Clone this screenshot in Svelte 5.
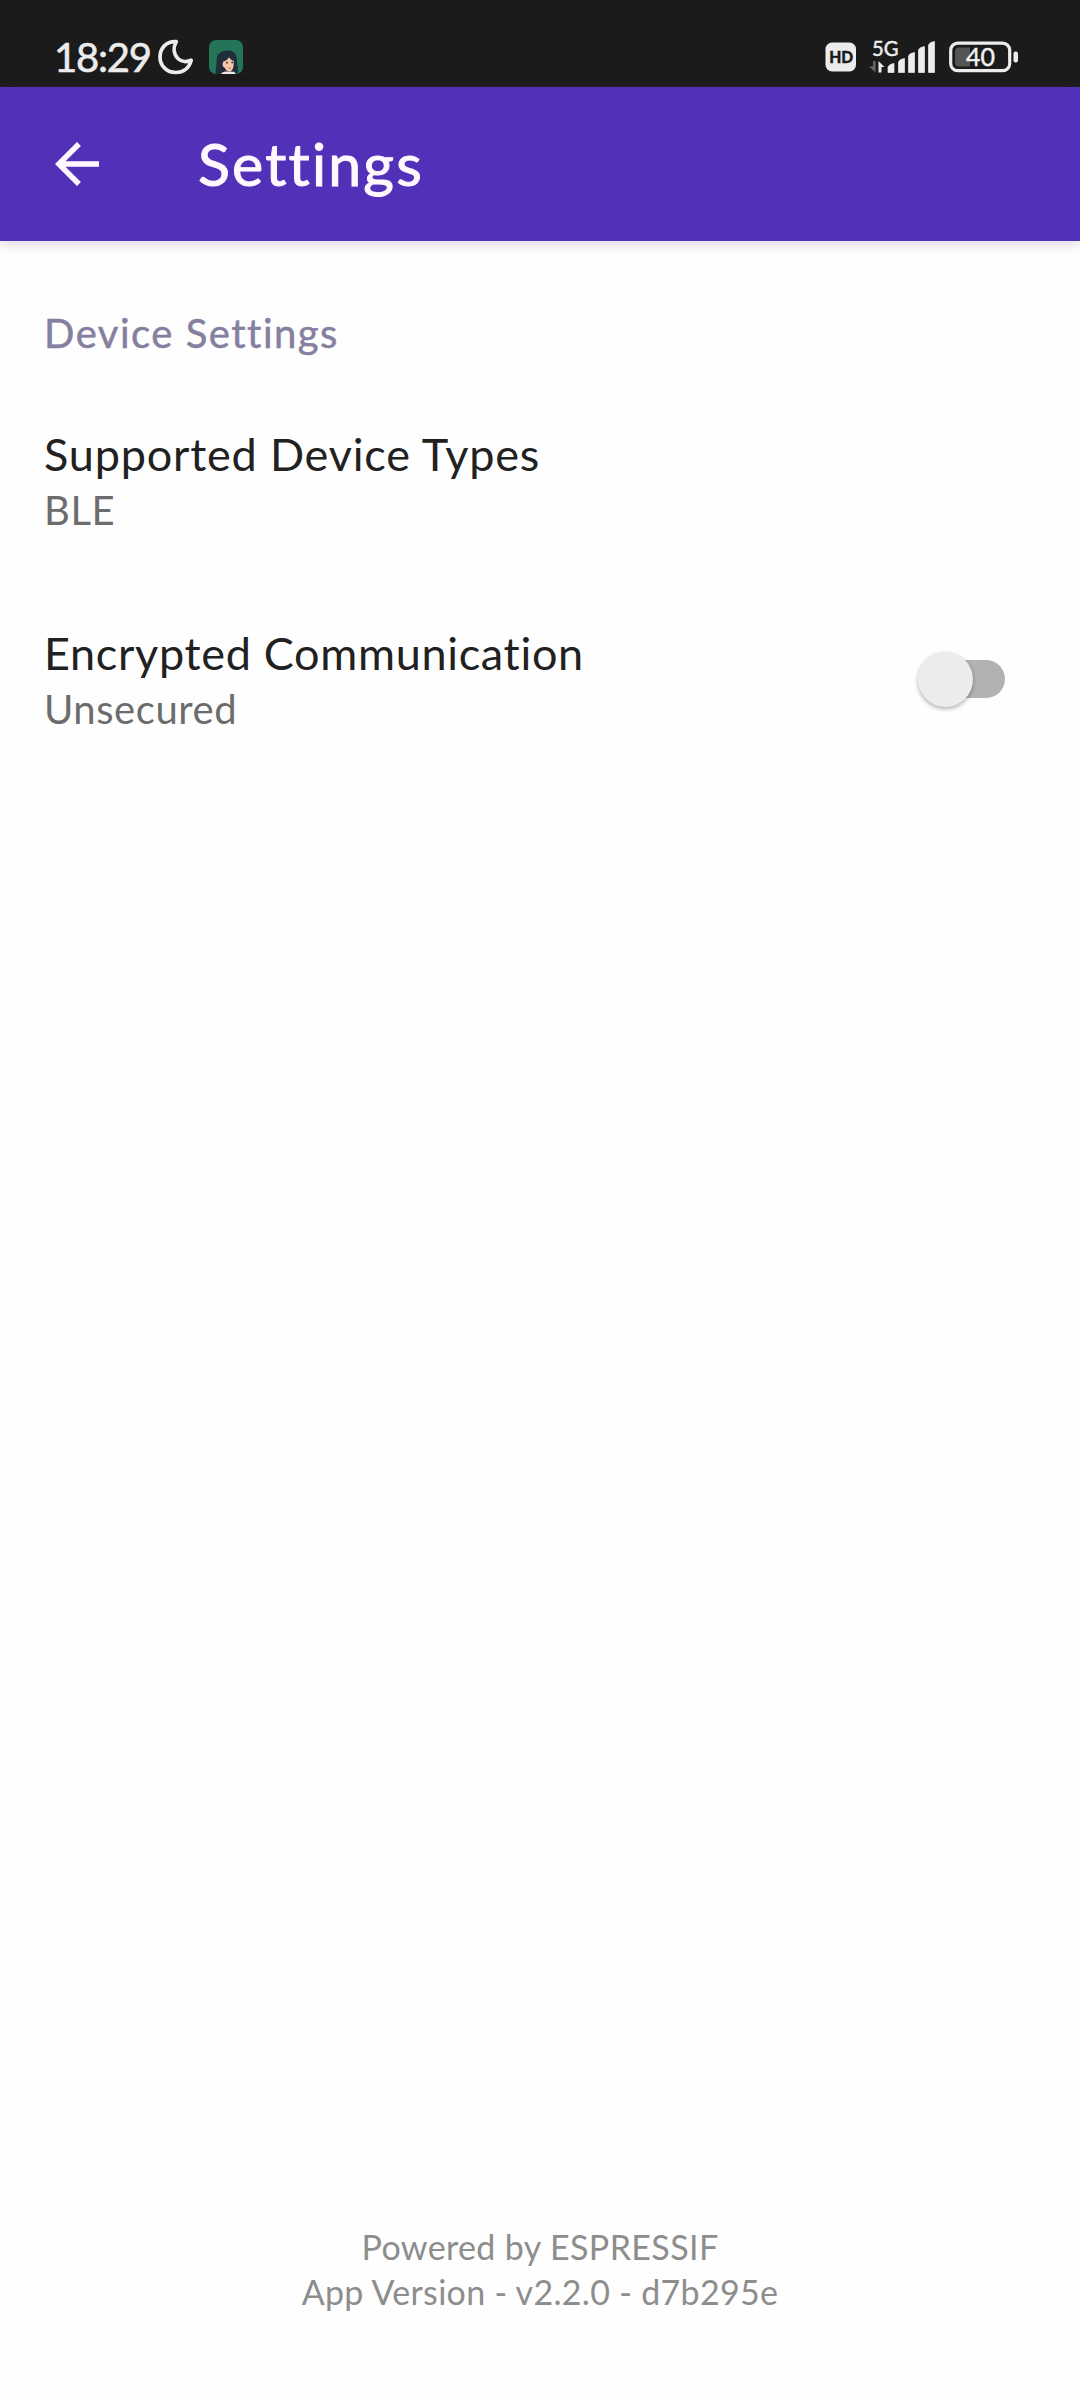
<script>
  const settings = [
    { id: 'types', title: 'Supported Device Types', value: 'BLE', toggle: false },
    { id: 'encrypted', title: 'Encrypted Communication', value: 'Unsecured', toggle: true }
  ];
  const bars = [
    { x: 19, top: 24 },
    { x: 29.5, top: 19 },
    { x: 39.5, top: 13 },
    { x: 49.5, top: 7 },
    { x: 59.5, top: 2 }
  ];
</script>

<div class="screen">
  <div class="status">
    <div class="left">
      <span class="clock">18:29</span>
      <svg class="moon" width="36" height="36" viewBox="0 0 36 36">
        <path d="M18.300 2.700C8 2 2 9.500 2 18c0 9 7 15.500 15.800 15.500 8 0 13.500-5 15.400-12.300-4 2.100-9.700 1.900-13.300-1.700C15.500 15 15 8.500 18.300 2.700Z" fill="none" stroke="#ececec" stroke-width="3.700" stroke-linejoin="round" />
      </svg>
      <svg class="avatar" width="34" height="34" viewBox="0 0 34 34">
        <defs><clipPath id="tile"><rect width="34" height="34" rx="7" /></clipPath></defs>
        <g clip-path="url(#tile)">
          <rect width="34" height="34" fill="#247558" />
          <path d="M7 34C6 30 8 26 7.500 20c0-6 5-10 11-9.500 6-.5 10 4 9.500 11 0 5 2.500 8 0 12.500Z" fill="#202d3b" />
          <path d="M12 34c.5-2 3-2.300 5-2.600l8 .3 2 2.300Z" fill="#eeeae6" />
          <path d="M14.500 21.500c3-1 4.500-2.500 5.500-4.500 1 2.500 2.500 3 4.700 4 .3 5.500-.7 9-3.200 10.500-2.500.5-5-1.500-6-4-2-.5-2.500-4-1-6Z" fill="#f3c7a8" />
          <circle cx="18" cy="22.700" r=".9" fill="#202d3b" />
          <circle cx="23.200" cy="22.400" r=".9" fill="#202d3b" />
          <path d="M19.500 28q1.500 1 2.500-.2" fill="none" stroke="#c96d5c" />
        </g>
      </svg>
    </div>
    <div class="right">
      <svg class="hd" width="32" height="30" viewBox="0 0 32 30">
        <rect x=".5" y=".5" width="30.500" height="29" rx="6.500" fill="#ececec" />
        <text x="4.200" y="21" textLength="24" lengthAdjust="spacingAndGlyphs" font-size="16.500" font-weight="900" fill="#1b1b1b" stroke="#1b1b1b" stroke-width=".4">HD</text>
      </svg>
      <svg class="signal" width="68" height="36" viewBox="0 0 68 36">
        <text x="3" y="16.500" textLength="26.500" lengthAdjust="spacingAndGlyphs" font-size="22" fill="#ececec" stroke="#ececec" stroke-width=".5">5G</text>
        <path d="M6.500 22v11.500L0 27.500h4V22Z" fill="#666" />
        <path d="M9.500 33.500V22l6 6h-3v5.500Z" fill="#ececec" />
        {#each bars as b}
          <path d="M{b.x} 33.500V{b.top + 4}q1-3 6-3.500V33.500Z" fill="#ececec" stroke="#ececec" stroke-width=".7" stroke-linejoin="round" />
        {/each}
      </svg>
      <svg class="battery" width="70" height="32" viewBox="0 0 70 32">
        <rect x="1.700" y="2.200" width="59" height="27.500" rx="7" fill="none" stroke="#ececec" stroke-width="3.200" />
        <path d="M21 6.500H10a4 4 0 0 0-4 4V21.500a4 4 0 0 0 4 4h11Z" fill="#555" />
        <rect x="64.500" y="10.500" width="4.500" height="11" rx="2" fill="#ececec" />
        <text x="17" y="25" textLength="29" lengthAdjust="spacingAndGlyphs" font-size="25" fill="#f2f2f2" stroke="#f2f2f2" stroke-width=".4">40</text>
      </svg>
    </div>
  </div>

  <header>
    <svg width="66" height="66" viewBox="0 0 24 24"><path d="M20 11H7.830l5.590-5.590L12 4l-8 8 8 8 1.410-1.410L7.830 13H20v-2z" fill="#fff8ff" /></svg>
    <h1>Settings</h1>
  </header>

  <main>
    <h2>Device Settings</h2>
    {#each settings as s}
      <section class="row">
        <div>
          <div class="title {s.id}">{s.title}</div>
          <div class="value">{s.value}</div>
        </div>
        {#if s.toggle}
          <div class="switch"><span class="thumb"></span></div>
        {/if}
      </section>
    {/each}
  </main>

  <footer>
    <div class="powered">Powered by ESPRESSIF</div>
    <div class="version">App Version - v2.2.0 - d7b295e</div>
  </footer>
</div>

<style>
  :global(body) { margin: 0; background: #fefefe; }
  .screen {
    width: 1080px;
    height: 2400px;
    display: flex;
    flex-direction: column;
    background: #fefefe;
    font-family: Lato, "Noto Sans", sans-serif;
    font-variant-ligatures: none;
    white-space: nowrap;
    overflow: hidden;
  }
  svg { display: block; flex: none; overflow: visible; }
  .status {
    height: 87px;
    background: #1b1b1b;
    color: #ececec;
    display: flex;
    justify-content: space-between;
    box-sizing: border-box;
    padding: 39px 61px 0 54px;
  }
  .left, .right { display: flex; align-items: flex-start; }
  .clock { width: 104px; font-size: 40px; line-height: 37px; font-weight: 400; letter-spacing: -1.2px; -webkit-text-stroke: .6px #ececec; }
  .avatar { margin: 1px 0 0 15px; }
  .hd { margin-top: 3px; }
  .signal { margin-left: 12px; }
  .battery { margin: 2px 0 0 12px; }
  header {
    height: 154px;
    background: #5230b8;
    color: #fff8ff;
    display: flex;
    align-items: center;
    box-sizing: border-box;
    padding-left: 44px;
    gap: 88px;
    box-shadow: 0 2px 12px rgba(90, 40, 110, .22);
  }
  h1 { margin: 0; font-size: 59px; line-height: 70px; font-weight: 400; letter-spacing: 2.2px; -webkit-text-stroke: 1px #fff8ff; }
  main { flex: 1; padding: 67px 75px 0 44px; }
  h2 { margin: 0; font-size: 40px; line-height: 50px; font-weight: 400; letter-spacing: 1.5px; color: #85809f; -webkit-text-stroke: .5px #85809f; }
  .row { height: 199px; display: flex; justify-content: space-between; }
  h2 + .row { margin-top: 69px; }
  .title { font-size: 45px; line-height: 54px; color: #212121; }
  .title.types { letter-spacing: .8px; }
  .title.encrypted { letter-spacing: .68px; }
  .value { padding-top: 2px; font-size: 40px; line-height: 54px; letter-spacing: .55px; color: #6c6c6c; }
  .switch { width: 79px; height: 38px; margin-top: 34px; border-radius: 19px; background: #b2b2b2; }
  .thumb {
    display: block;
    width: 55px;
    height: 55px;
    margin: -8px 0 0 -8px;
    border-radius: 50%;
    background: #ececec;
    box-shadow: 0 2px 4px rgba(0, 0, 0, .3);
  }
  footer { padding-bottom: 86px; text-align: center; font-size: 34px; line-height: 45px; color: #8d8d8d; }
  .powered { letter-spacing: .38px; }
  .version { letter-spacing: .31px; }
</style>
